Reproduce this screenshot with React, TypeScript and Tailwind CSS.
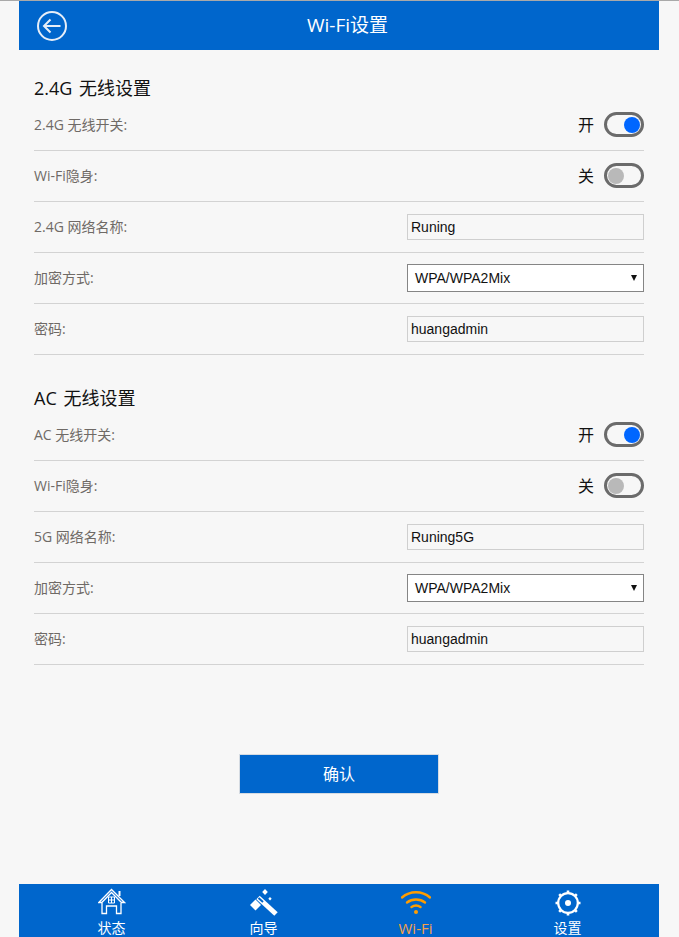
import React from "react";

const uiFont = "font-['Open_Sans','Noto_Sans_CJK_SC',sans-serif]";
const fieldFont = "font-['Liberation_Sans','Noto_Sans_CJK_SC',sans-serif]";

const Row = ({ label, children }: { label: string; children: React.ReactNode }) => (
  <div className="flex h-[51px] items-center justify-between border-b border-[#d3d3d3] pb-px">
    <span className="text-[14px] text-[#6f6a66]">{label}</span>
    {children}
  </div>
);

const Toggle = ({ on }: { on: boolean }) => (
  <div className="flex items-center gap-[10px]">
    <span className="text-[16px] leading-none text-[#111]">{on ? "开" : "关"}</span>
    <div className={`flex h-[25px] w-[40px] items-center rounded-full border-[3px] border-[#6b6b6b] bg-[#f7f7f7] px-[1px] ${on ? "justify-end" : "justify-start"}`}>
      <div className={`h-[16px] w-[16px] rounded-full ${on ? "bg-[#0066ff]" : "bg-[#b9b9b9]"}`} />
    </div>
  </div>
);

const TextBox = ({ value }: { value: string }) => (
  <div className={`flex h-[26px] w-[237px] items-center border border-[#cfcfcf] bg-[#f7f7f7] pl-[3px] pt-[2px] text-[14px] text-[#111] ${fieldFont}`}>
    {value}
  </div>
);

const SelectBox = () => (
  <div className={`flex h-[28px] w-[237px] items-center justify-between border border-[#858585] bg-white pl-[7px] pr-[6px] pt-[2px] text-[14px] text-[#111] ${fieldFont}`}>
    <span>WPA/WPA2Mix</span>
    <svg width="6" height="6" viewBox="0 0 6 6" className="-mt-[2px]"><path d="M0 0h6L3 6z" fill="#111" /></svg>
  </div>
);

const Section = ({ title, band, name, value }: { title: string; band: string; name: string; value: string }) => (
  <section>
    <h2 className="text-[18px] leading-[24px] text-[#111] [word-spacing:2px]">{title}</h2>
    <Row label={band}><Toggle on /></Row>
    <Row label="Wi-Fi隐身:"><Toggle on={false} /></Row>
    <Row label={name}><TextBox value={value} /></Row>
    <Row label="加密方式:"><SelectBox /></Row>
    <Row label="密码:"><TextBox value="huangadmin" /></Row>
  </section>
);

const HouseIcon = () => (
  <svg width="28" height="30" viewBox="0 0 28 30" fill="none" stroke="white" strokeWidth="1.3">
    <path d="M.8 14.500 13.500 1.500 26.500 14.500h-3L13.500 4.500 3.800 14.500z" />
    <path d="M21.500 3v5" strokeWidth="2" />
    <path d="M4 15v10.500h4.500V18h10v7.500H23V15" />
    <path d="M10.500 9h6v6h-6zM13.500 9v6M10.500 12h6" strokeWidth="1" />
  </svg>
);

const WandIcon = () => (
  <svg width="28" height="30" viewBox="0 0 28 30" fill="white">
    <path d="M8 9.500 26 26" stroke="white" strokeWidth="5" />
    <path d="M8.500 10 13 14" stroke="#0066cc" strokeWidth="2" />
    <path d="M5.500 11.500 11 17l-5.500 5.500L0 17z" />
    <path d="m15 1 2.800 3-2.800 3-2.800-3z" />
    <path d="m20 9 1.700 1.800L20 12.500l-1.700-1.700z" />
  </svg>
);

const WifiIcon = () => (
  <svg width="30" height="25" viewBox="0 0 30 25" fill="none" stroke="#ff9d00" strokeWidth="2.400" strokeLinecap="round">
    <path d="M1 7.500C9 0.500 21 0.500 29 7.500" />
    <path d="M6 12.500c5-4 13-4 18 0" />
    <path d="M10.500 17c3-2 6-2 9 0" />
    <circle cx="15" cy="22" r="2" fill="#ff9d00" stroke="none" />
  </svg>
);

const GearIcon = () => (
  <svg width="26" height="26" viewBox="0 0 26 26" fill="none" stroke="white">
    <circle cx="13" cy="13" r="9.800" strokeWidth="2.200" />
    <path d="M13 .5v3M13 22.500v3M.5 13h3M22.500 13h3M4.200 4.200l2.100 2.100M19.700 19.700l2.100 2.100M4.200 21.800l2.100-2.100M19.700 6.300l2.100-2.100" strokeWidth="2.600" />
    <circle cx="13" cy="13" r="3" fill="white" stroke="none" />
  </svg>
);

const NavItem = ({ icon, label, active }: { icon: React.ReactNode; label: string; active?: boolean }) => (
  <div className="flex w-[152px] flex-col items-center">
    <div className="flex h-[33px] items-center justify-center">{icon}</div>
    <span className={`text-[14px] leading-[18px] ${active ? "text-[15px] text-[#f5a04a]" : "text-white"}`}>{label}</span>
  </div>
);

export default function App() {
  return (
    <div className={`flex h-[937px] flex-col overflow-hidden bg-[#f7f7f7] ${uiFont}`}>
      <div className="h-px bg-[#a9a9a9]" />
      <header className="ml-[19px] mr-[20px] flex h-[49px] shrink-0 items-center bg-[#0066cc] pl-[18px]">
        <svg width="30" height="30" viewBox="0 0 30 30" fill="none" stroke="#e6eef8" strokeWidth="2">
          <circle cx="15" cy="15" r="14" />
          <path d="M23.500 15H7M13.500 8.500 7 15l6.500 6.500" />
        </svg>
        <h1 className="ml-[240px] text-[19px] text-white">Wi-Fi设置</h1>
      </header>

      <main className="ml-[34px] mr-[35px] flex-1 pt-[26px]">
        <Section title="2.4G 无线设置" band="2.4G 无线开关:" name="2.4G 网络名称:" value="Runing" />
        <div className="h-[31px]" />
        <Section title="AC 无线设置" band="AC 无线开关:" name="5G 网络名称:" value="Runing5G" />
        <button className="mx-auto mt-[89px] block h-[40px] w-[200px] border border-[#d5dbe2] bg-[#0066cc] text-[16px] text-white">
          确认
        </button>
      </main>

      <footer className="ml-[19px] mr-[20px] flex h-[53px] shrink-0 justify-center overflow-hidden bg-[#0066cc] pl-[1px] pt-[2px]">
        <NavItem icon={<HouseIcon />} label="状态" />
        <NavItem icon={<WandIcon />} label="向导" />
        <NavItem icon={<WifiIcon />} label="Wi-Fi" active />
        <NavItem icon={<GearIcon />} label="设置" />
      </footer>
    </div>
  );
}
